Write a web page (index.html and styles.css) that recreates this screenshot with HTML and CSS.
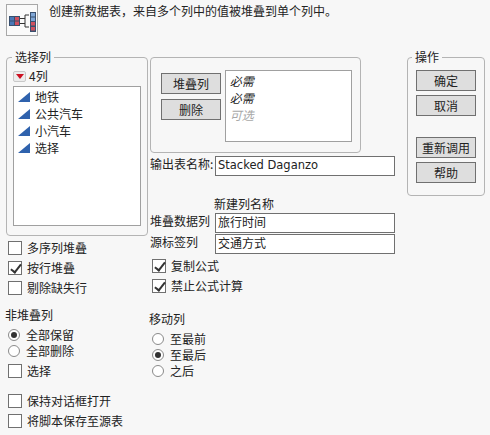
FILE: index.html
```html
<!DOCTYPE html>
<html lang="zh">
<head>
  <meta charset="UTF-8" />
  <title>堆叠</title>
  <link rel="stylesheet" href="styles.css">
</head>
<body>

  <div class="header">
    <div class="logo">
      <svg width="30" height="30" viewBox="0 0 30 30">
        <rect x="2" y="11" width="11" height="10" fill="#39506f"/>
        <rect x="3" y="12" width="4" height="3.5" fill="#4a78b8"/>
        <rect x="8" y="12" width="4" height="3.5" fill="#d0505f"/>
        <rect x="3" y="16.5" width="4" height="3.5" fill="#4a78b8"/>
        <rect x="8" y="16.5" width="4" height="3.5" fill="#d0505f"/>
        <path d="M13 13.5H18M13 18.5H18M18 10V22M18 10H22M18 22H22" fill="none" stroke="#333" stroke-width="1"/>
        <rect x="23" y="7" width="6" height="20" fill="#39506f"/>
        <rect x="24" y="8" width="4" height="3.5" fill="#7fa6d6"/>
        <rect x="24" y="12.5" width="4" height="3.5" fill="#7fa6d6"/>
        <rect x="24" y="17" width="4" height="3.5" fill="#d0505f"/>
        <rect x="24" y="22" width="4" height="3.5" fill="#d0505f"/>
      </svg>
    </div>
    <div class="intro">创建新数据表，来自多个列中的值被堆叠到单个列中。</div>
  </div>

  <div class="main">

    <div class="col-left">
      <fieldset class="group select-cols">
        <legend>选择列</legend>
        <div class="count">
          <span class="menu-btn"></span>
          <span>4列</span>
        </div>
        <ul class="col-list">
          <li><svg class="tri" width="12" height="10" viewBox="0 0 12 10"><path d="M0 10L12 0V10Z" fill="#2f62ad"/></svg>地铁</li>
          <li><svg class="tri" width="12" height="10" viewBox="0 0 12 10"><path d="M0 10L12 0V10Z" fill="#2f62ad"/></svg>公共汽车</li>
          <li><svg class="tri" width="12" height="10" viewBox="0 0 12 10"><path d="M0 10L12 0V10Z" fill="#2f62ad"/></svg>小汽车</li>
          <li><svg class="tri" width="12" height="10" viewBox="0 0 12 10"><path d="M0 10L12 0V10Z" fill="#2f62ad"/></svg>选择</li>
        </ul>
      </fieldset>

      <div class="checks first">
        <div class="check"><span class="box"></span>多序列堆叠</div>
        <div class="check"><span class="box on"></span>按行堆叠</div>
        <div class="check"><span class="box"></span>剔除缺失行</div>
      </div>

      <div class="sub-title">非堆叠列</div>
      <div class="radios">
        <div class="radio"><span class="dot on"></span>全部保留</div>
        <div class="radio"><span class="dot"></span>全部删除</div>
      </div>
      <div class="checks">
        <div class="check"><span class="box"></span>选择</div>
      </div>

      <div class="checks last">
        <div class="check"><span class="box"></span>保持对话框打开</div>
        <div class="check"><span class="box"></span>将脚本保存至源表</div>
      </div>
    </div>

    <div class="col-mid">
      <div class="group stack-box">
        <div class="btn-col">
          <button>堆叠列</button>
          <button>删除</button>
        </div>
        <div class="role-list">
          <div>必需</div>
          <div>必需</div>
          <div class="optional">可选</div>
        </div>
      </div>

      <div class="field output-name">
        <label>输出表名称:</label>
        <div class="text-input latin">Stacked Daganzo</div>
      </div>

      <div class="new-name">新建列名称</div>
      <div class="field">
        <label>堆叠数据列</label>
        <div class="text-input">旅行时间</div>
      </div>
      <div class="field second">
        <label>源标签列</label>
        <div class="text-input">交通方式</div>
      </div>

      <div class="checks mid">
        <div class="check"><span class="box on"></span>复制公式</div>
        <div class="check"><span class="box on"></span>禁止公式计算</div>
      </div>

      <div class="sub-title move">移动列</div>
      <div class="radios move-list">
        <div class="radio"><span class="dot"></span>至最前</div>
        <div class="radio"><span class="dot on"></span>至最后</div>
        <div class="radio"><span class="dot"></span>之后</div>
      </div>
    </div>

    <fieldset class="group actions">
      <legend>操作</legend>
      <button>确定</button>
      <button>取消</button>
      <button class="gap">重新调用</button>
      <button>帮助</button>
    </fieldset>

  </div>

</body>
</html>
```

FILE: styles.css
```css
body {
  margin: 0;
  width: 490px;
  height: 435px;
  overflow: hidden;
  background-color: #f7f7f7;
  color: #222;
  font-family: 'Noto Sans CJK SC', 'Noto Sans', sans-serif;
  font-size: 12px;
  line-height: 16px;
}

/* top row */
.header {
  display: flex;
  padding: 4px 0 0 6px;
  height: 36px;
  box-sizing: border-box;
}
.logo {
  width: 32px;
  height: 32px;
  box-sizing: border-box;
  border: 1px solid #a8a8a8;
  background: #fafafa;
}
.logo svg {
  display: block;
}
.intro {
  margin-left: 11px;
  margin-top: -1px;
}

.main {
  display: flex;
  padding-top: 15px;
}

.col-left {
  width: 144px;
  margin-left: 6px;
}
.col-mid {
  width: 257px;
  margin-top: 6px;
}

/* group boxes */
.group {
  margin: 0;
  padding: 0;
  box-sizing: border-box;
  border: 1px solid #b4b4b4;
  border-radius: 4px;
}
.group legend {
  padding: 0 3px;
  line-height: 12px;
}

.select-cols {
  width: 141px;
  height: 185px;
  padding: 0 6px;
}
.select-cols legend {
  margin-left: -1px;
}
.count {
  display: flex;
  align-items: center;
  height: 16px;
  margin: 5px 0 0 0;
  gap: 3px;
}
.menu-btn {
  position: relative;
  display: block;
  width: 13px;
  height: 11px;
  box-sizing: border-box;
  border: 1px solid #c8c8c8;
  border-radius: 2px;
  background: #ececec;
}
.menu-btn::after {
  content: "";
  position: absolute;
  left: 2px;
  top: 2px;
  border-left: 4px solid transparent;
  border-right: 4px solid transparent;
  border-top: 5px solid #cc1122;
}
.col-list {
  list-style: none;
  margin: 2px 0 0;
  padding: 1px 0 0 4px;
  height: 140px;
  box-sizing: border-box;
  width: 128px;
  background: #fff;
  border: 1px solid #a0a0a0;
}
.col-list li {
  display: flex;
  align-items: center;
  height: 17px;
  gap: 5px;
}
.tri {
  flex-shrink: 0;
}

/* checkboxes and radios */
.checks.first {
  margin-top: 5px;
  margin-left: 2px;
}
.check {
  display: flex;
  align-items: center;
  height: 14px;
  margin-bottom: 6px;
  gap: 5px;
  white-space: nowrap;
}
.box {
  position: relative;
  display: block;
  width: 14px;
  height: 14px;
  box-sizing: border-box;
  border: 1px solid #707070;
  background: #fff;
}
.box.on::after {
  content: "";
  position: absolute;
  left: 4px;
  top: 0;
  width: 4px;
  height: 9px;
  border-right: 2px solid #333;
  border-bottom: 2px solid #333;
  transform: rotate(38deg);
}
.sub-title {
  margin-top: 12px;
  margin-left: -1px;
}
.radios {
  margin-top: 4px;
  margin-left: 2px;
}
.radio {
  display: flex;
  align-items: center;
  height: 16px;
  gap: 6px;
}
.dot {
  position: relative;
  display: block;
  width: 12px;
  height: 12px;
  box-sizing: border-box;
  border: 1px solid #8a8a8a;
  border-radius: 50%;
  background: #fff;
}
.dot.on::after {
  content: "";
  position: absolute;
  left: 2px;
  top: 2px;
  width: 6px;
  height: 6px;
  border-radius: 50%;
  background: #333;
}
.col-left .radios + .checks {
  margin-top: 5px;
  margin-left: 2px;
}
.checks.last {
  margin-top: 16px;
  margin-left: 2px;
}

/* middle column */
.stack-box {
  display: flex;
  width: 211px;
  height: 96px;
  padding: 12px 8px 0 10px;
}
.btn-col {
  width: 64px;
  padding-top: 3px;
}
button {
  display: block;
  width: 60px;
  height: 21px;
  padding: 0;
  margin: 0;
  box-sizing: border-box;
  border: 1px solid #707070;
  border-radius: 0;
  background: #dedede;
  color: #222;
  font: inherit;
}
.btn-col button + button {
  margin-top: 5px;
}
.role-list {
  width: 128px;
  height: 72px;
  box-sizing: border-box;
  padding: 1px 0 0 4px;
  background: #fff;
  border: 1px solid #a0a0a0;
  font-style: italic;
  line-height: 17px;
}
.optional {
  color: #a8a8a8;
}
.field {
  display: flex;
  align-items: flex-start;
}
.field label {
  width: 65px;
  white-space: nowrap;
}
.text-input {
  width: 180px;
  height: 20px;
  box-sizing: border-box;
  padding-left: 2px;
  background: #fff;
  border: 1px solid #707070;
  line-height: 16px;
}
.latin {
  font-family: 'DejaVu Sans', sans-serif;
  font-size: 11.5px;
}
.output-name {
  margin-top: 3px;
}
.new-name {
  margin-top: 20px;
  margin-left: 64px;
  height: 17px;
}
.field.second {
  margin-top: 1px;
}
.checks.mid {
  margin-top: 5px;
  margin-left: 2px;
}
.sub-title.move {
  margin-top: 18px;
}
.move-list {
  margin-left: 2px;
}

/* action buttons */
.actions {
  width: 77px;
  height: 145px;
  padding: 0 8px;
  align-self: flex-start;
}
.actions legend {
  margin-left: -4px;
}
.actions button {
  margin-top: 4px;
}
.actions legend + button {
  margin-top: 7px;
}
.actions button.gap {
  margin-top: 21px;
}
```
